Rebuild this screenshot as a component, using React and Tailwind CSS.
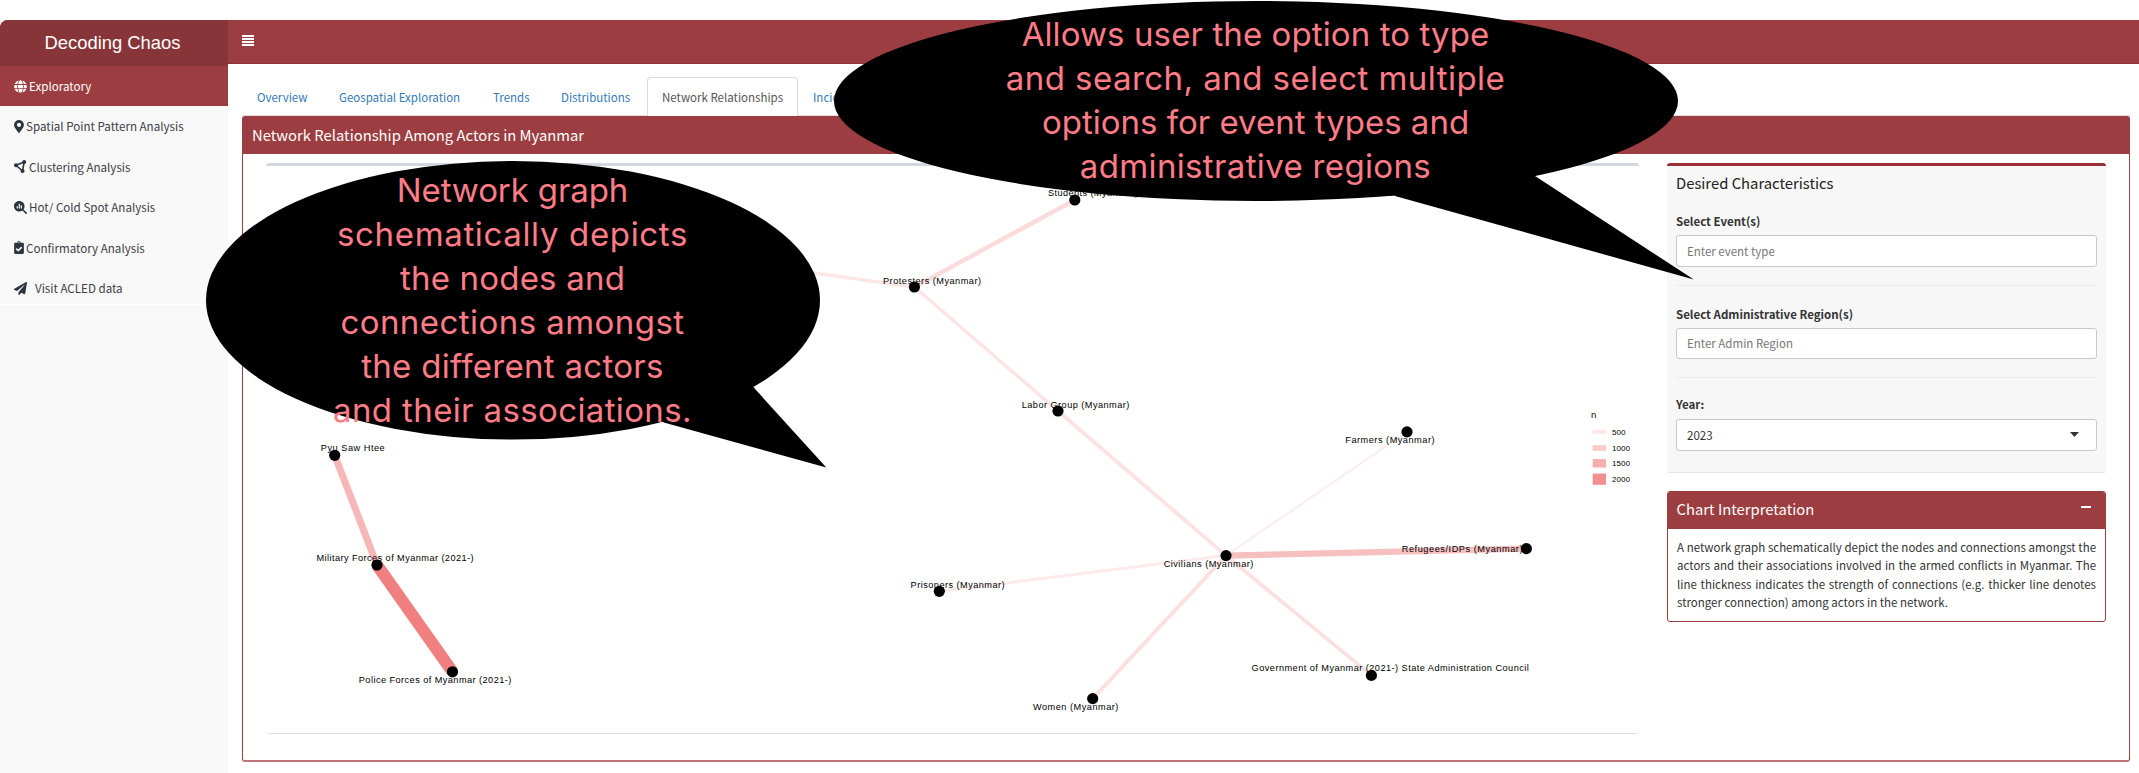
import { FaMapMarkerAlt, FaClipboardCheck, FaPaperPlane, FaGlobe } from "react-icons/fa";
import { FaCircleNodes, FaMagnifyingGlassChart } from "react-icons/fa6";

const MENU = [
  { label: "Spatial Point Pattern Analysis", Icon: FaMapMarkerAlt, size: "w-[10px]", gap: "gap-[2px]" },
  { label: "Clustering Analysis", Icon: FaCircleNodes, size: "w-[13px]", gap: "gap-[2px]" },
  { label: "Hot/ Cold Spot Analysis", Icon: FaMagnifyingGlassChart, size: "w-[13px]", gap: "gap-[2px]" },
  { label: "Confirmatory Analysis", Icon: FaClipboardCheck, size: "w-[10px]", gap: "gap-[2px]" },
  { label: "Visit ACLED data", Icon: FaPaperPlane, size: "w-[13px]", gap: "gap-[8px]" },
];

const TABS = [
  { label: "Overview", width: "w-[82px]" },
  { label: "Geospatial Exploration", width: "w-[154px]" },
  { label: "Trends", width: "w-[68px]" },
  { label: "Distributions", width: "w-[101px]" },
  { label: "Network Relationships", width: "w-[151px]", active: true },
  { label: "Incidents", width: "w-[85px]" },
];

const NODES = [
  [914.4, 287], [1058, 411], [1407, 431.9], [1526.4, 548.6], [1226, 555.6], [939.3, 591.3],
  [1371.4, 675.4], [1092.7, 698.6], [1074.8, 200], [334.7, 455.3], [377, 565], [452.5, 671.8],
];

const EDGES = [
  [700, 257, 914.4, 287, 3.5, "#fce6e6"],
  [914.4, 287, 1074.8, 200, 4.5, "#fbdcdc"],
  [914.4, 287, 1058, 411, 3.5, "#fce4e4"],
  [1058, 411, 1226, 555.6, 3.8, "#fce2e2"],
  [1226, 555.6, 1407, 431.9, 2.2, "#fdeeee"],
  [1226, 555.6, 1526.4, 548.6, 6.3, "#f7c0c0"],
  [1226, 555.6, 939.3, 591.3, 3, "#fdeaea"],
  [1226, 555.6, 1092.7, 698.6, 3.8, "#fce0e0"],
  [1226, 555.6, 1371.4, 675.4, 3.8, "#fce0e0"],
  [334.7, 455.3, 377, 565, 7, "#f7b7b7"],
  [377, 565, 452.5, 671.8, 12, "#f08080"],
];

const LABELS = [
  ["Students (Myanmar)", 1048, 1138, 192.5],
  ["Protesters (Myanmar)", 883, 981, 280.4],
  ["Labor Group (Myanmar)", 1021.7, 1129.3, 404.4],
  ["Farmers (Myanmar)", 1345.3, 1434.5, 439.9],
  ["Refugees/IDPs (Myanmar)", 1401.7, 1522.5, 548.8],
  ["Civilians (Myanmar)", 1163.7, 1253.3, 563.8],
  ["Prisoners (Myanmar)", 910.6, 1004.6, 584.2],
  ["Government of Myanmar (2021-) State Administration Council", 1251.6, 1528.8, 667.8],
  ["Women (Myanmar)", 1033, 1118.4, 706.9],
  ["Pyu Saw Htee", 320.8, 384.7, 447.9],
  ["Military Forces of Myanmar (2021-)", 316.5, 473.6, 557.8],
  ["Police Forces of Myanmar (2021-)", 358.8, 511.3, 679.3],
];

const LEGEND = [
  ["500", 431.8, 4, "#fce6e6", 13.5],
  ["1000", 448, 5.6, "#f9caca", 18],
  ["1500", 463.3, 8.4, "#f5adad", 18],
  ["2000", 479.2, 11.2, "#f28f8f", 18],
];

function NetworkChart() {
  return (
    <svg className="block h-[567px] w-[1372px]" viewBox="266 166 1372 567" fontFamily="'Liberation Sans', sans-serif">
      {EDGES.map(([x1, y1, x2, y2, w, c]) => (
        <line key={`${x1}-${x2}-${y2}`} x1={x1} y1={y1} x2={x2} y2={y2} stroke={c} strokeWidth={w} />
      ))}
      {NODES.map(([x, y]) => (
        <circle key={`${x}`} cx={x} cy={y} r="5.6" fill="#000" />
      ))}
      {LABELS.map(([t, x1, x2, y]) => (
        <text key={t} x={x1} y={y + 3.4} fontSize="9.2" fill="#000" textLength={x2 - x1}>{t}</text>
      ))}
      <text x="1591" y="417.5" fontSize="9.5" fill="#000">n</text>
      {LEGEND.map(([t, y, h, c, w]) => (
        <g key={t}>
          <rect x="1592.7" y={y - h / 2} width="13.3" height={h} fill={c} />
          <text x="1612" y={y + 3} fontSize="8" fill="#000" textLength={w}>{t}</text>
        </g>
      ))}
    </svg>
  );
}

function Field({ label, placeholder, height }) {
  return (
    <div>
      <div className="h-5 text-[11.5px] leading-5 font-bold text-[#333]">{label}</div>
      <div className={`mt-[4px] flex items-center rounded-[3px] border border-[#c9c9c9] bg-white pl-[10px] text-[11.5px] leading-5 text-[#777] ${height}`}>
        {placeholder}
      </div>
    </div>
  );
}

const CALLOUT_GRAPH = [
  ["Network graph", "tracking-[-0.1px]"],
  ["schematically depicts", "tracking-[0.65px]"],
  ["the nodes and", "tracking-[0.2px]"],
  ["connections amongst", "tracking-[0.45px]"],
  ["the different actors", "tracking-[0.3px]"],
  ["and their associations.", "tracking-[0.37px]"],
];

const CALLOUT_FILTER = [
  ["Allows user the option to type", "tracking-[0.1px]"],
  ["and search, and select multiple", "tracking-[0.45px]"],
  ["options for event types and", "tracking-[0px]"],
  ["administrative regions", "tracking-[0.35px]"],
];

function CalloutText({ lines }) {
  return lines.map(([t, tracking]) => (
    <p key={t} className={`text-center font-['Inter',sans-serif] text-[33px] leading-[44px] whitespace-nowrap text-[#ff7c86] ${tracking}`}>{t}</p>
  ));
}

export default function App() {
  return (
    <div className="relative h-[773px] w-[2139px] overflow-hidden bg-white pt-5 font-['Noto_Sans_CJK_SC','Source_Sans_Pro',sans-serif]">
      <div className="flex h-[753px]">
        <aside className="w-[228px] shrink-0 bg-[#f8f8f8]">
          <div className="h-[86px] overflow-hidden rounded-tl-[8px] bg-[#9b3d41]">
            <div className="h-[46px] bg-[#873538] pr-[3px] text-center font-['Liberation_Sans',sans-serif] text-[18.4px] leading-[46px] text-white">Decoding Chaos</div>
            <div className="flex h-10 items-center gap-[2px] pl-[14px] text-[11.6px] leading-5 text-white">
              <FaGlobe className="h-[13px] w-[13px]" />
              <span>Exploratory</span>
            </div>
          </div>
          <nav className="h-[199px] border-b border-white">
            {MENU.map(({ label, Icon, size, gap }) => (
              <div key={label} className={`flex h-[40.5px] items-center pl-[14px] text-[11.6px] leading-5 text-[#3c4046] ${gap}`}>
                <Icon className={`h-[13px] shrink-0 text-[#2c3440] ${size}`} />
                <span>{label}</span>
              </div>
            ))}
          </nav>
        </aside>

        <div className="flex min-w-0 flex-1 flex-col">
          <header className="flex h-[43.5px] shrink-0 items-start border-b border-[#8d3337] bg-[#9b3d41] pt-[15px] pl-[14px]">
            <div className="flex w-[11.5px] flex-col gap-[1px]">
              <span className="h-[2px] bg-white" />
              <span className="h-[2px] bg-white" />
              <span className="h-[2px] bg-white" />
              <span className="h-[2px] bg-white" />
            </div>
          </header>

          <main className="pt-[13.5px] pl-[14px]">
            <div className="flex h-[39px] w-[1887.5px] border-b border-[#dddddd] text-[11.5px]">
              {TABS.map(({ label, width, active }) => (
                <div
                  key={label}
                  className={`h-[39px] shrink-0 pl-[14px] leading-[39px] ${width} ${active ? "rounded-t-[4px] border border-b-0 border-[#d9d9d9] bg-white text-[#555]" : "border border-transparent text-[#337ab7]"}`}
                >
                  {label}
                </div>
              ))}
            </div>

            <section className="h-[646px] w-[1887.5px] rounded-[3px] border border-b-2 border-[#9b3d41] border-b-[#b97578]">
              <div className="h-[37px] bg-[#9b3d41] pl-[9px] text-[14.8px] leading-[35px] text-white">Network Relationship Among Actors in Myanmar</div>
              <div className="flex items-start pt-[9px] pl-[23px]">
                <div className="h-[571px] w-[1373px] shrink-0 rounded-[3px] border-t-[3px] border-b border-t-[#d2d6de] border-b-[#e0e0e0]">
                  <NetworkChart />
                </div>

                <div className="ml-[28px] flex w-[439px] flex-col">
                  <div className="h-[310px] rounded-[3px] border-t-[3px] border-b border-t-[#9b2f35] border-b-[#e4e4e4] bg-[#f7f7f7] px-[9px]">
                    <div className="pt-[7px] text-[14.8px] leading-5 text-[#222]">Desired Characteristics</div>
                    <div className="mt-[17.5px]">
                      <Field label="Select Event(s)" placeholder="Enter event type" height="h-[32px]" />
                    </div>
                    <div className="mt-[18.5px] h-px bg-[#ececec]" />
                    <div className="mt-[17.5px]">
                      <Field label="Select Administrative Region(s)" placeholder="Enter Admin Region" height="h-[31px]" />
                    </div>
                    <div className="mt-[18px] h-px bg-[#ececec]" />
                    <div className="mt-[16.5px] h-5 text-[11.5px] leading-5 font-bold text-[#333]">Year:</div>
                    <div className="mt-[4.5px] flex h-[32px] items-center justify-between rounded-[3px] border border-[#c9c9c9] bg-white pr-[17px] pl-[10px] text-[11.5px] leading-5 text-[#333]">
                      <span>2023</span>
                      <svg className="h-[5px] w-[9px]" viewBox="0 0 9 5"><path d="M0 0H9L4.5 5Z" fill="#333" /></svg>
                    </div>
                  </div>

                  <div className="mt-[18px] h-[131px] overflow-hidden rounded-[3px] border border-[#9b3d41]">
                    <div className="flex h-[37px] items-start justify-between bg-[#9b3d41] pr-[14px] pl-[8.5px] text-[14.8px] leading-[34px] text-white">
                      <span>Chart Interpretation</span>
                      <span className="mt-[14px] h-[2px] w-[10px] bg-white" />
                    </div>
                    <p className="px-[9px] pt-[9px] text-justify text-[11.5px] leading-[18.3px] text-[#333]">
                      A network graph schematically depict the nodes and connections amongst the actors and their associations involved in the armed conflicts in Myanmar. The line thickness indicates the strength of connections (e.g. thicker line denotes stronger connection) among actors in the network.
                    </p>
                  </div>
                </div>
              </div>
            </section>
          </main>
        </div>
      </div>

      <div className="absolute top-[160px] left-[205px] h-[310px] w-[624px]">
        <svg className="absolute inset-0 h-full w-full" viewBox="205 160 624 310">
          <ellipse cx="513" cy="300.3" rx="307" ry="139.3" />
          <path d="M740 380L753.5 387.3L826.3 467.5L663.8 422.5L640 400Z" />
        </svg>
        <div className="relative w-[615px] pt-[8px]">
          <CalloutText lines={CALLOUT_GRAPH} />
        </div>
      </div>

      <div className="absolute top-0 left-[833px] h-[281px] w-[862px]">
        <svg className="absolute inset-0 h-full w-full" viewBox="833 0 862 281">
          <ellipse cx="1256" cy="101" rx="422" ry="100" />
          <path d="M1500 160L1535 176L1693.8 279.5L1395 196L1380 170Z" />
        </svg>
        <div className="relative w-[845px] pt-[12px]">
          <CalloutText lines={CALLOUT_FILTER} />
        </div>
      </div>
    </div>
  );
}
